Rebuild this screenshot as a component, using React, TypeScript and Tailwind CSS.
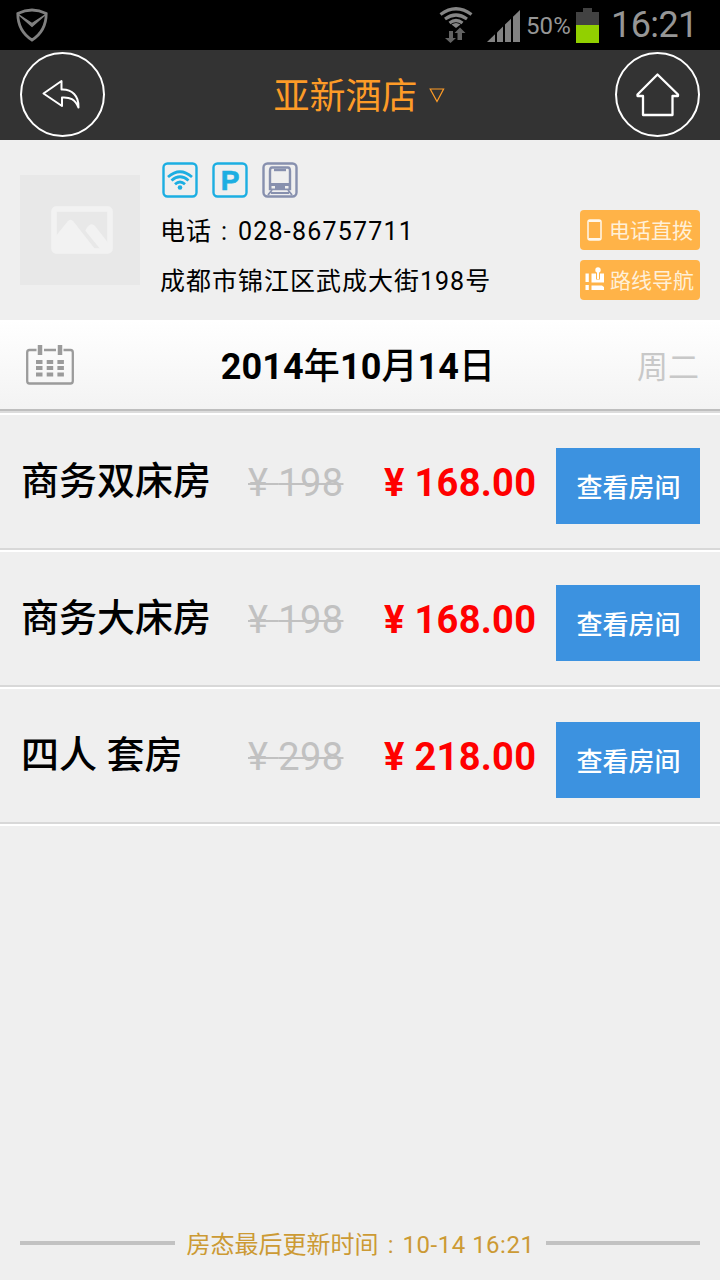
const rooms = [
  { name: "商务双床房", oldPrice: "198", price: "168.00" },
  { name: "商务大床房", oldPrice: "198", price: "168.00" },
  { name: "四人 套房", oldPrice: "298", price: "218.00" },
];

function Colon() {
  return <span className="inline-block w-[1em] text-center">:</span>;
}

function StatusBar() {
  return (
    <div className="flex h-[50px] items-center bg-black text-[#969696]">
      <svg className="ml-4 h-[34px] w-8" viewBox="0 0 32 34" fill="none" stroke="#808080" strokeWidth="2.8">
        <path d="M1.8 5.5Q16 -1.5 30.2 5.5Q30.2 23 16 32Q1.8 23 1.8 5.5Z" />
        <path d="M3 7L16 18.5L29 7L16 15.5Z" fill="#808080" strokeWidth="1.2" />
      </svg>
      {/* Wifi with traffic arrows */}
      <svg className="ml-auto h-9 w-[34px]" viewBox="0 0 34 36" fill="none" stroke="#858585" strokeWidth="3.2">
        <path d="M1.5 7.5Q17 -4 32.5 7.5" />
        <path d="M6 12Q17 4 28 12" />
        <path d="M10.5 16Q17 11 23.5 16" />
        <path d="M12.5 17.5Q17 14.5 21.5 17.5L17 21Z" fill="#858585" stroke="none" />
        <path d="M10 24H14V31H17L11.5 36L6 31H10Z" fill="#626262" stroke="none" />
        <path d="M21 20.5L26.5 26H23V33H18.5V26H15.5Z" fill="#626262" stroke="none" />
      </svg>
      {/* Signal */}
      <svg className="ml-[14px] mt-px h-8 w-[33px]" viewBox="0 0 33 32" fill="#828282">
        <path d="M0 32L8 24.3V32Z" />
        <path d="M10 32V22.4L16 16.5V32Z" />
        <path d="M18 32V14.6L24 8.8V32Z" />
        <path d="M26 32V6.8L33 0V32Z" />
      </svg>
      <span className="ml-[6px] mt-[2px] w-[46px] whitespace-nowrap text-[24px] tracking-[0.1px]">50%</span>
      <svg className="ml-[4px] h-[35px] w-[23px]" viewBox="0 0 23 35">
        <path d="M7 0H16V4H23V17H0V4H7Z" fill="#424242" />
        <path d="M0 17H23V35H0Z" fill="#92d000" />
      </svg>
      <span className="ml-[12px] mr-[22px] w-[87px] whitespace-nowrap text-[36px] tracking-[-0.6px]">16:21</span>
    </div>
  );
}

function Header() {
  return (
    <header className="flex h-[90px] items-center justify-between bg-[#333] px-5 pb-[2px]">
      <button className="flex size-[85px] items-center justify-center rounded-full border-2 border-white">
        <svg className="size-[85px] shrink-0" viewBox="0 0 85 85" fill="none" stroke="#fff" strokeWidth="2" strokeLinejoin="round">
          <path d="M23.5 41.5L41.5 29V37.5C52 37 59 44 58.5 55.5C55 47 50 45 42 45.5V54Z" />
        </svg>
      </button>
      <h1 className="-ml-[2px] flex items-center pt-[6px] text-[36px] text-[#fd9b27]">
        亚新酒店
        <svg className="-mt-[4px] ml-[11px] h-[15px] w-4" viewBox="0 0 16 15" fill="none" stroke="#fd9b27" strokeWidth="1.2">
          <path d="M1.2 1H14.6L8 13.5Z" />
        </svg>
      </h1>
      <button className="flex size-[85px] items-center justify-center rounded-full border-2 border-white">
        <svg className="size-[85px] shrink-0" viewBox="0 0 85 85" fill="none" stroke="#fff" strokeWidth="2.3" strokeLinejoin="round">
          <path d="M42.5 22.5L22.5 42.5V44H28V63H57.5V44H63V42.5Z" />
        </svg>
      </button>
    </header>
  );
}

function Amenities() {
  return (
    <div className="flex gap-[14px]">
      <svg className="size-9" viewBox="0 0 36 36" fill="none" stroke="#1caee2" strokeWidth="2.4">
        <rect x="1.5" y="1.5" width="33" height="33" rx="4" />
        <path d="M6 15Q18 4.5 30 15" strokeWidth="2.8" />
        <path d="M9.5 18.5Q18 11 26.5 18.5" strokeWidth="2.8" />
        <path d="M13 22.3Q18 17.8 23 22.3" strokeWidth="2.8" />
        <circle cx="18" cy="25.5" r="2.3" fill="#1caee2" stroke="none" />
      </svg>
      <svg className="size-9" viewBox="0 0 36 36">
        <rect x="1.5" y="1.5" width="33" height="33" rx="4" fill="none" stroke="#1caee2" strokeWidth="2.4" />
        <text
          x="18.2"
          y="27.5"
          textAnchor="middle"
          fill="#1caee2"
          stroke="#1caee2"
          strokeWidth="0.7"
          className="font-['Liberation_Sans',sans-serif] text-[28px] font-bold"
        >
          P
        </text>
      </svg>
      <svg className="size-9" viewBox="0 0 36 36" fill="none" stroke="#8790ae" strokeWidth="2.4">
        <rect x="1.5" y="1.5" width="33" height="33" rx="4" />
        <path d="M10 5.5H26Q28 5.5 28 9V27H8V9Q8 5.5 10 5.5Z" />
        <path d="M12 8H24" />
        <path d="M8 21H28V28H8Z" fill="#8790ae" stroke="none" />
        <path d="M9.5 24H13V26.5H9.5ZM23 24H26.5V26.5H23Z" fill="#efefef" stroke="none" />
        <path d="M10 28L6 33M26 28L30 33M9 31H27" strokeWidth="1.8" />
      </svg>
    </div>
  );
}

function HotelInfo() {
  return (
    <section className="flex h-[180px] px-5">
      <div className="mt-[35px] flex h-[110px] w-[120px] items-center justify-center bg-[#e8e8e8]">
        <svg className="ml-[3px] h-12 w-[62px]" viewBox="0 0 62 48">
          <rect x="3" y="3" width="56" height="42" rx="2" fill="none" stroke="#f2f2f2" strokeWidth="5.5" />
          <path d="M4 31L16.5 15.5Q19.5 12 22.5 15.5L44 43H4Z" fill="#f2f2f2" />
          <path d="M34.5 25Q34 23.5 38 19.5Q41 17 44 20L58 38V44H50Z" fill="#f2f2f2" />
        </svg>
      </div>
      <div className="ml-[22px] pt-[22px]">
        <Amenities />
        <p className="-ml-[2px] mt-[9px] h-[50px] whitespace-nowrap text-[25px] leading-[50px] tracking-[1px]">
          电话<Colon /><span className="ml-px tracking-[1.2px]">028-86757711</span>
        </p>
        <p className="-ml-[2px] h-[50px] whitespace-nowrap text-[25px] leading-[50px] tracking-[1px]">
          成都市锦江区武成大街198号
        </p>
      </div>
      <div className="ml-auto flex flex-col gap-[10px] pt-[70px] text-[21px] text-[#fff0d8]">
        <button className="flex h-10 w-[120px] items-center rounded-[4px] bg-[#ffb348] pl-[7px]">
          <svg className="h-[22px] w-4" viewBox="0 0 16 22" fill="none" stroke="#fff8ec">
            <rect x="1" y="1" width="13" height="20" rx="2" strokeWidth="1.5" />
            <path d="M2 2H13M2 20H13" strokeWidth="2" />
          </svg>
          <span className="ml-[6px] mt-[3px] whitespace-nowrap">电话直拨</span>
        </button>
        <button className="flex h-10 w-[120px] items-center rounded-[4px] bg-[#ffb348] pl-[5px]">
          <svg className="-mt-[3px] h-6 w-5" viewBox="0 0 20 24" fill="#fff">
            <path d="M0.5 6.5H3.8V15H0.5ZM0.5 18H3.8V23H0.5ZM6.5 6.5H19V15.5H6.5ZM6.5 18.5H17L19 20V23H6.5Z" />
            <path d="M11 5H15V12.5H11Z" fill="#ffb348" />
            <circle cx="13" cy="3" r="2.7" />
            <path d="M12 5H14V12H12Z" />
          </svg>
          <span className="ml-[5px] mt-[3px] whitespace-nowrap">路线导航</span>
        </button>
      </div>
    </section>
  );
}

function DateBar() {
  return (
    <section className="border-b-2 border-white">
      <div className="border-b-2 border-[#dcdcdc]">
        <div className="h-[91px] border-b-2 border-[#bebebe] bg-gradient-to-b from-white to-[#f3f3f3]">
          <div className="flex h-[90px] items-center justify-between pl-[26px] pr-[21px]">
            <svg className="h-10 w-12" viewBox="0 0 48 40" fill="none" stroke="#9b9b9b" strokeWidth="2.3">
              <path d="M10.5 5H3.5Q1.2 5 1.2 7.5V36Q1.2 38.5 3.5 38.5H44.5Q46.8 38.5 46.8 36V7.5Q46.8 5 44.5 5H37.5M18 5H30" />
              <path d="M14 0V10M34 0V10" strokeWidth="4.5" />
              <path d="M10 17H38M10 23H38M10 29.5H38" strokeWidth="4" strokeDasharray="6.5 4.2" />
            </svg>
            <span className="ml-[5px] mt-[4px] text-[36px] font-bold tracking-[0.1px]">
              2014<span className="font-medium">年</span>10<span className="font-medium">月</span>14
              <span className="font-medium">日</span>
            </span>
            <span className="mt-[6px] text-[31px] text-[#c8c8c8]">周二</span>
          </div>
        </div>
      </div>
    </section>
  );
}

export default function App() {
  return (
    <div className="flex h-[1280px] w-[720px] flex-col overflow-hidden bg-[#efefef] font-[Roboto,'Noto_Sans_CJK_SC',sans-serif] text-black">
      <StatusBar />
      <Header />
      <HotelInfo />
      <DateBar />
      <ul>
        {rooms.map((room) => (
          <li key={room.name} className="border-b-2 border-white">
            <div className="flex h-[135px] items-center border-b-2 border-[#d8d8d8] pl-[21px] pr-5">
              <span className="w-[227px] whitespace-nowrap text-[38px] font-medium">{room.name}</span>
              <span className="mt-[3px] w-[136px] whitespace-nowrap text-[38px] tracking-[0.4px] text-[#c1c1c1] line-through decoration-2">
                ¥ {room.oldPrice}
              </span>
              <span className="mt-[3px] whitespace-nowrap text-[38px] font-bold tracking-[0.3px] text-[#f00]">¥ {room.price}</span>
              <button className="ml-auto mt-[8px] h-[76px] w-36 bg-[#3c92e0] pl-px pt-[5px] text-[26px] font-medium text-white">
                查看房间
              </button>
            </div>
          </li>
        ))}
      </ul>
      <footer className="mt-auto flex h-[72px] items-center justify-between px-5 pb-[3px]">
        <div className="h-1 w-[155px] bg-[#c2c2c2]" />
        <p className="mt-[5px] whitespace-nowrap text-[24px] text-[#cc9a34]">
          房态最后更新时间<Colon /><span className="tracking-[0.5px]">10-14 16:21</span>
        </p>
        <div className="h-1 w-[154px] bg-[#c2c2c2]" />
      </footer>
    </div>
  );
}
